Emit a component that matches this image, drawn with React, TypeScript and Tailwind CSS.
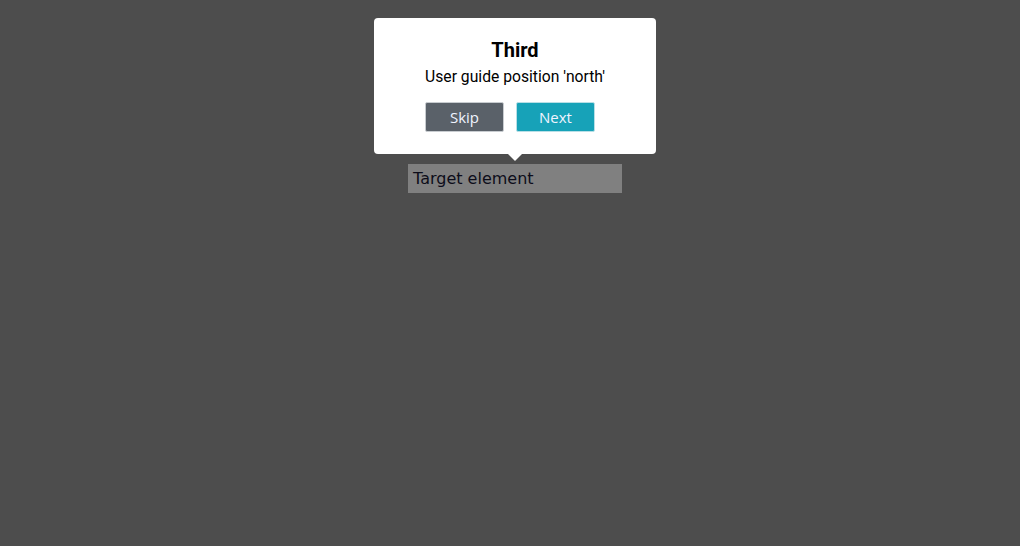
const App = () => {
  return (
    <div className="relative w-full h-[546px] bg-[#4d4d4d] overflow-hidden">
      <div className="pt-[164px] pl-[408px]">
        <div className="w-[214px] h-[29px] bg-[#808080] px-[5px] flex items-center text-[16px] text-[#0d0d1a] font-['DejaVu_Sans',sans-serif]">
          Target element
        </div>
      </div>

      <div className="absolute left-[374px] top-[18px] w-[282px] h-[136px] bg-white rounded-[4px] font-['Roboto',sans-serif] text-black">
        <div className="flex flex-col items-center pt-[20px]">
          <h3 className="text-[20px] font-bold leading-[25px]">Third</h3>
          <p className="text-[15.7px] leading-[22px] mt-[3px]">User guide position 'north'</p>
          <div className="flex gap-[12px] pr-[10px] mt-[14px] font-['Open_Sans',sans-serif] text-[15px]">
            <button className="w-[79px] h-[30px] bg-[#5a6169] text-[#f0f4ff] border border-[#c8ccd0] rounded-[2px]">Skip</button>
            <button className="w-[79px] h-[30px] bg-[#17a2b8] text-[#f0f4ff] border border-[#b8dfe6] rounded-[2px]">Next</button>
          </div>
        </div>
        <div className="absolute left-[134px] top-full w-0 h-0 border-l-[7px] border-r-[7px] border-t-[7px] border-l-transparent border-r-transparent border-t-white" />
      </div>
    </div>
  );
};

export default App;
